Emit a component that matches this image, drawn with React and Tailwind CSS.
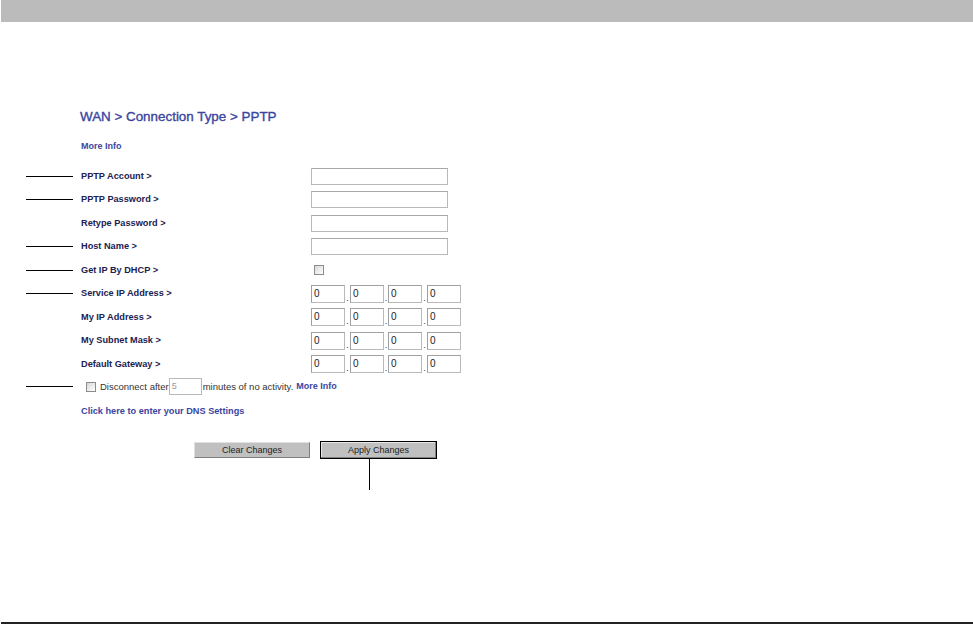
const font = { fontFamily: '"Liberation Sans", Arial, sans-serif' };

const Line = ({ show }) => (
  <div className="w-[47px] shrink-0 mr-[8px] flex items-center">
    {show && <div className="w-full h-px bg-black" />}
  </div>
);

const Label = ({ children }) => (
  <div className="w-[230px] shrink-0 text-[9.2px] font-bold text-[#1c2150] leading-none">
    {children}
  </div>
);

const TextBox = () => (
  <div className="w-[137px] h-[17px] border border-[#b9b9b9] border-t-[#a8a8a8] bg-white" />
);

const Checkbox = () => (
  <span className="inline-block w-[10px] h-[10px] border border-[#8c8c8c] bg-gradient-to-br from-[#d8d8d8] to-white" />
);

const IpBox = () => (
  <div className="w-[34px] h-[18px] border border-[#b9b9b9] border-t-[#a0a0a0] border-l-[#a0a0a0] bg-white text-[10px] text-[#222] leading-[16px] pl-[2px]">
    0
  </div>
);

const IpGroup = () => (
  <div className="flex items-end">
    <IpBox />
    <span className="w-[5px] text-center text-[9px] leading-[10px] text-[#333]">.</span>
    <IpBox />
    <span className="w-[4px] text-center text-[9px] leading-[10px] text-[#333]">.</span>
    <IpBox />
    <span className="w-[5px] text-center text-[9px] leading-[10px] text-[#333]">.</span>
    <IpBox />
  </div>
);

const Row = ({ line, label, children }) => (
  <div className="flex items-center pl-[26px] h-[23.5px]">
    <Line show={line} />
    <Label>{label}</Label>
    {children}
  </div>
);

export default function App() {
  const rows = [
    { line: true, label: "PPTP Account >", field: <TextBox /> },
    { line: true, label: "PPTP Password >", field: <TextBox /> },
    { line: false, label: "Retype Password >", field: <TextBox /> },
    { line: true, label: "Host Name >", field: <TextBox /> },
    { line: true, label: "Get IP By DHCP >", field: <div className="pl-[3px] flex"><Checkbox /></div> },
    { line: true, label: "Service IP Address >", field: <IpGroup /> },
    { line: false, label: "My IP Address >", field: <IpGroup /> },
    { line: false, label: "My Subnet Mask >", field: <IpGroup /> },
    { line: false, label: "Default Gateway >", field: <IpGroup /> },
  ];

  return (
    <div className="w-[973px] h-[624px] bg-white flex flex-col" style={font}>
      <div className="h-[22px] ml-px bg-[#bbbbbb] shrink-0" />

      <div className="mt-[87px] pl-[80px] text-[13.4px] leading-[16px] text-[#3b45a0] [-webkit-text-stroke:0.35px_#3b45a0]">
        WAN &gt; Connection Type &gt; PPTP
      </div>
      <div className="mt-[15px] pl-[81px] text-[9px] font-bold leading-[12px] text-[#3b45a0]">
        More Info
      </div>

      <div className="mt-[12.5px]">
        {rows.map((r) => (
          <Row key={r.label} line={r.line} label={r.label}>
            {r.field}
          </Row>
        ))}

        <div className="flex items-center pl-[26px] h-[21px]">
          <Line show />
          <div className="pl-[5px] flex items-center text-[9.5px] text-[#333] leading-none">
            <Checkbox />
            <span className="ml-[4px]">Disconnect after</span>
            <div className="w-[33px] h-[17px] border border-[#b9b9b9] bg-white text-[9px] text-[#999] leading-[15px] pl-[2px]">
              5
            </div>
            <span className="ml-[1px]">minutes of no activity.</span>
            <span className="ml-[3px] text-[9px] font-bold text-[#3b45a0]">More Info</span>
          </div>
        </div>

        <div className="flex items-center h-[29px] pl-[81px] text-[9.2px] font-bold text-[#3b45a0] leading-none">
          Click here to enter your DNS Settings
        </div>
      </div>

      <div className="mt-[15px] pl-[194px] flex items-start gap-[10px]">
        <button className="mt-px w-[116px] h-[16px] bg-[#c0c0c0] border border-[#808080] border-t-[#e0e0e0] border-l-[#e0e0e0] text-[9px] text-[#222] leading-none">
          Clear Changes
        </button>
        <div className="flex flex-col">
          <button className="w-[117px] h-[18px] bg-[#c0c0c0] border border-black text-[9px] text-[#222] leading-none shadow-[inset_-1px_-1px_0_#808080,inset_1px_1px_0_#e8e8e8]">
            Apply Changes
          </button>
          <div className="ml-[49px] w-px h-[31px] bg-black" />
        </div>
      </div>

      <div className="flex-1" />
      <div className="h-[2px] ml-px bg-[#222] shrink-0" />
    </div>
  );
}
